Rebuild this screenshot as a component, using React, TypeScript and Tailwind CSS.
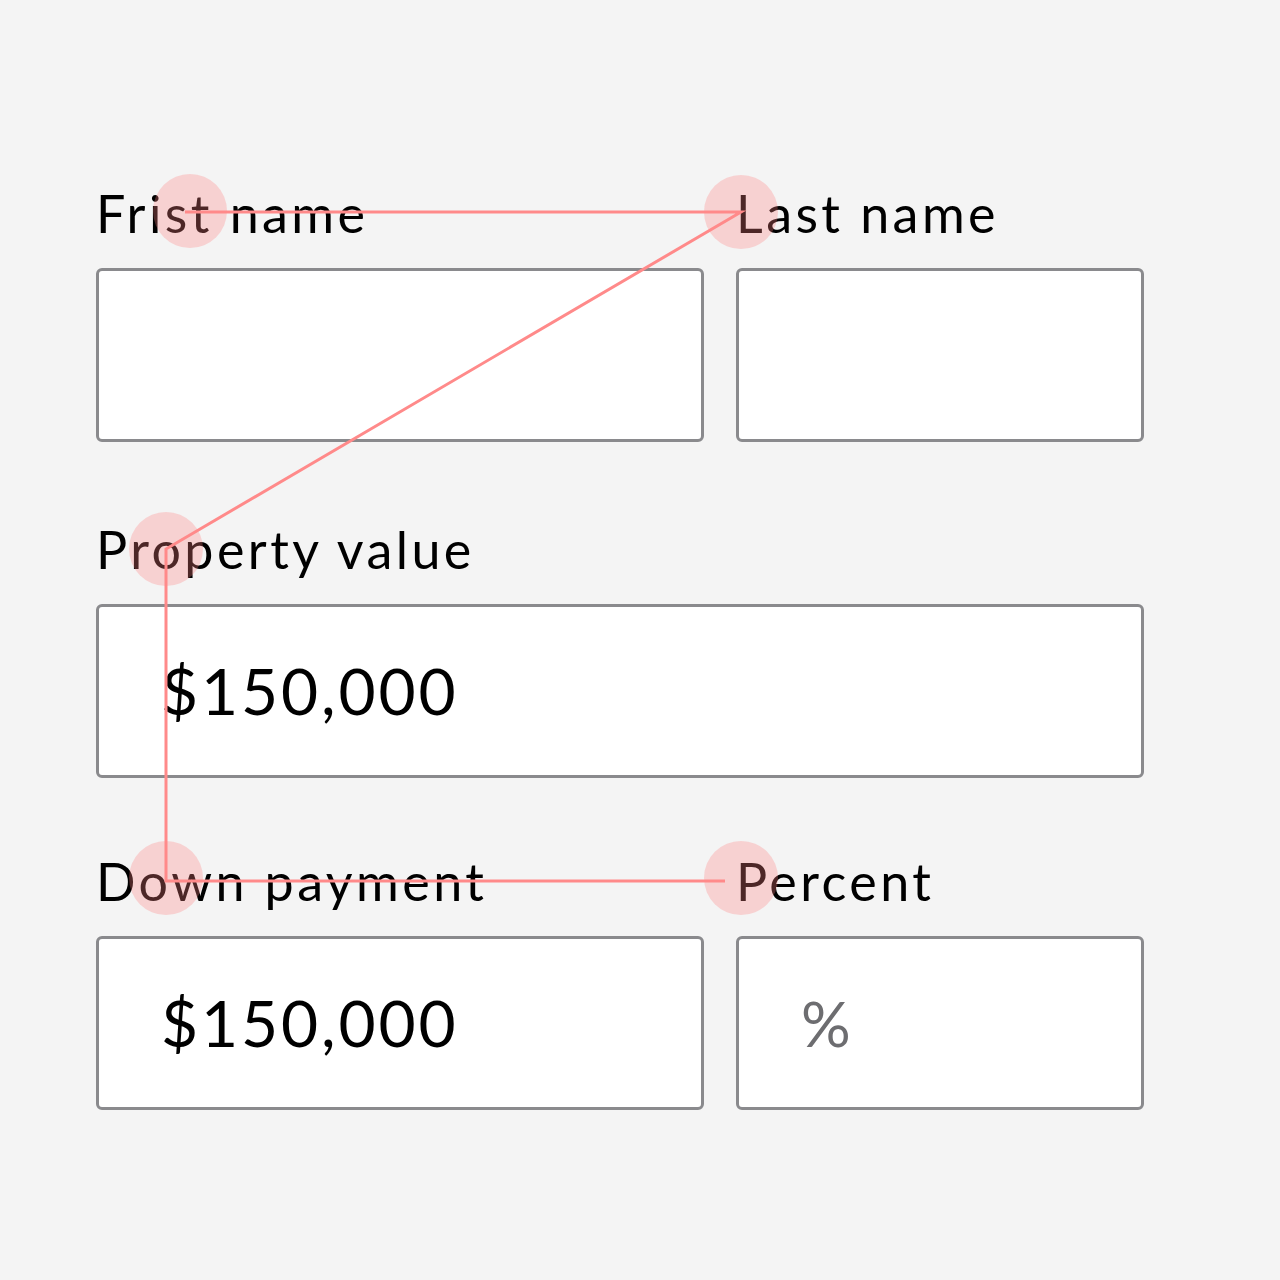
const FONT = "font-['Lato','Noto_Sans',sans-serif]"

type FieldProps = {
  label: string
  value?: string
  muted?: boolean
}

const Field = ({ label, value, muted }: FieldProps) => (
  <div className="flex flex-col">
    <label className="h-[64px] text-[52px] font-normal leading-[64px] tracking-[0.066em] text-black">{label}</label>
    <div className="mt-[23px] flex h-[174px] items-center rounded-[6px] border-[3px] border-[#8a8a8d] bg-white pl-[62px]">
      {value ? (
        <span
          className={
            muted
              ? 'text-[62px] font-normal text-[#6d6d70]'
              : 'text-[64px] font-normal tracking-[0.045em] text-black'
          }
        >
          {value}
        </span>
      ) : null}
    </div>
  </div>
)

// reading order overlay: dots + connecting path
const ReadingOrder = () => {
  const dots = [
    [190, 211],
    [741, 212],
    [166, 549],
    [166, 878],
    [741, 878],
  ]
  return (
    <svg className="pointer-events-none absolute inset-0" width="1280" height="1280" viewBox="0 0 1280 1280">
      {dots.map(([cx, cy]) => (
        <circle key={`${cx}-${cy}`} cx={cx} cy={cy} r="37" fill="rgba(255,128,128,0.3)" />
      ))}
      <polyline
        points="185,212 741,212 166,549 166,881 725,881"
        fill="none"
        stroke="#ff8a8a"
        strokeWidth="3"
      />
    </svg>
  )
}

const App = () => {
  return (
    <div className={`relative min-h-[1280px] bg-[#f4f4f4] ${FONT}`}>
      <div className="flex w-[1144px] flex-col pl-[96px] pt-[181px]">
        <div className="grid grid-cols-[608px_408px] gap-x-[32px]">
          <Field label="Frist name" />
          <Field label="Last name" />
        </div>
        <div className="mt-[75px]">
          <Field label="Property value" value="$150,000" />
        </div>
        <div className="mt-[71px] grid grid-cols-[608px_408px] gap-x-[32px]">
          <Field label="Down payment" value="$150,000" />
          <Field label="Percent" value="%" muted />
        </div>
      </div>
      <ReadingOrder />
    </div>
  )
}

export default App
